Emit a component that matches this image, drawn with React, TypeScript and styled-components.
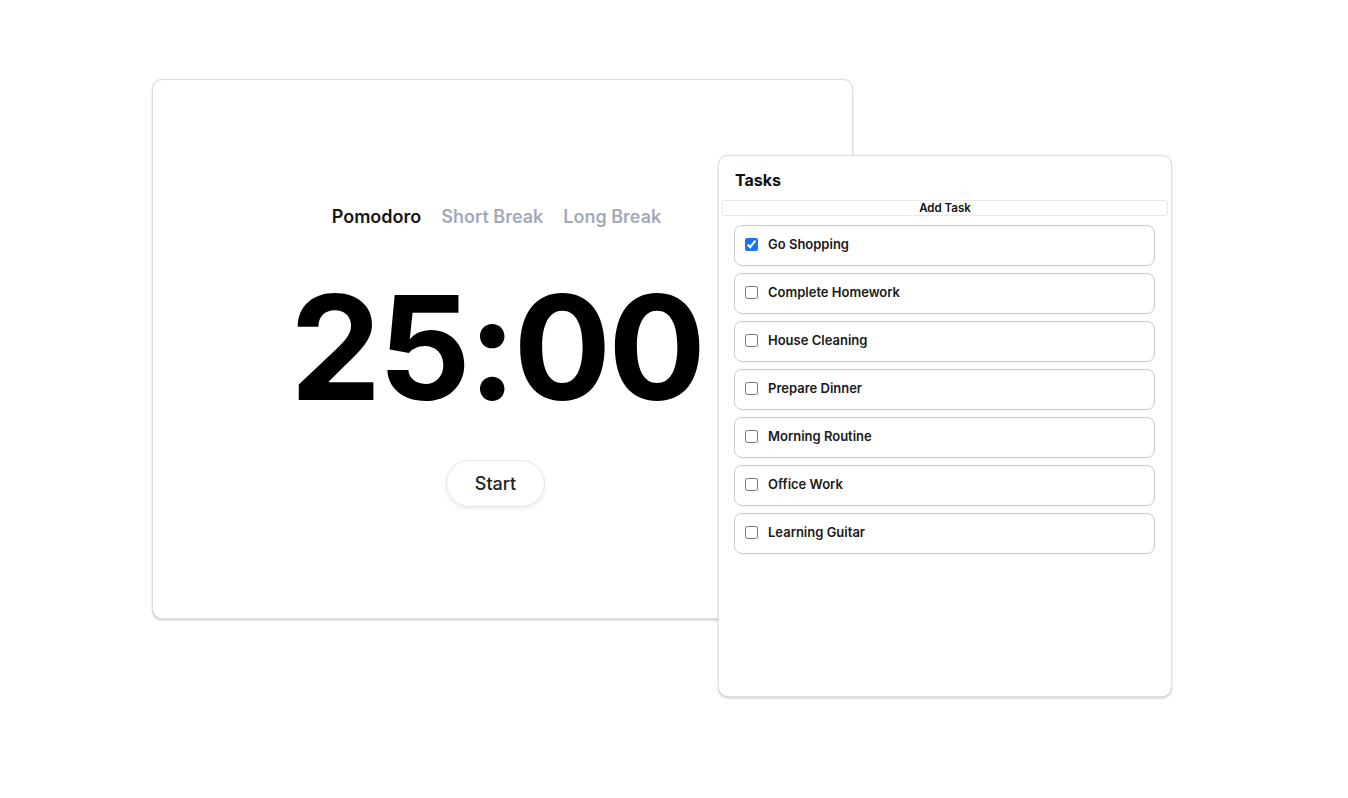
import React, { useState } from "react";
import styled, { createGlobalStyle } from "styled-components";

const Global = createGlobalStyle`
  html, body { margin: 0; padding: 0; background: #ffffff; }
  body { font-family: Inter, "Noto Sans", "Liberation Sans", sans-serif; color: #111; }
  * { box-sizing: border-box; }
`;

const Page = styled.div`
  width: 1348px;
  height: 798px;
  display: flex;
  align-items: flex-start;
  padding: 79px 0 0 152px;
`;

const TimerCard = styled.section`
  width: 701px;
  height: 540px;
  flex-shrink: 0;
  background: #fff;
  border: 1px solid #dedede;
  border-radius: 10px;
  box-shadow: 0 2px 2px rgba(0, 0, 0, 0.14), 0 0 1px rgba(0, 0, 0, 0.2);
  display: flex;
  flex-direction: column;
  align-items: center;
  padding: 125px 12px 0 0;
`;

const Tabs = styled.nav`
  display: flex;
  gap: 20px;
  height: 24px;
  align-items: center;
`;

const Tab = styled.button<{ $active?: boolean }>`
  border: none;
  background: none;
  padding: 0;
  font-family: inherit;
  font-size: 18px;
  line-height: 24px;
  font-weight: 600;
  color: ${(p) => (p.$active ? "#151515" : "#a3aab8")};
  cursor: pointer;
`;

const Clock = styled.div`
  margin-top: 46px;
  font-size: 145px;
  line-height: 145px;
  font-weight: 700;
  letter-spacing: -3px;
  color: #000;
`;

const StartButton = styled.button`
  margin-top: 40px;
  margin-right: 2px;
  width: 99px;
  height: 47px;
  border-radius: 24px;
  border: 1px solid #e6e6e6;
  background: #fff;
  box-shadow: 0 2px 4px rgba(0, 0, 0, 0.08);
  font-family: inherit;
  font-size: 18px;
  font-weight: 500;
  color: #222;
  cursor: pointer;
`;

const TasksPanel = styled.section`
  position: relative;
  z-index: 1;
  margin: 76px 0 0 -135px;
  width: 454px;
  height: 542px;
  flex-shrink: 0;
  background: #fff;
  border: 1px solid #e2e2e2;
  border-radius: 10px;
  box-shadow: 0 2px 2px rgba(0, 0, 0, 0.14), 0 0 1px rgba(0, 0, 0, 0.2);
  padding: 14px 3px 0 3px;
  display: flex;
  flex-direction: column;
`;

const Title = styled.h2`
  margin: 0 0 0 13px;
  font-size: 16px;
  line-height: 20px;
  font-weight: 700;
  color: #111;
`;

const AddTask = styled.button`
  margin-top: 10px;
  height: 16px;
  border: 1px solid #e8e8ec;
  border-radius: 3px;
  background: #fff;
  font-family: inherit;
  font-size: 11.5px;
  line-height: 14px;
  font-weight: 600;
  color: #111;
  padding: 0;
  cursor: pointer;
`;

const List = styled.ul`
  list-style: none;
  margin: 9px 0 0 0;
  padding: 0 13px 0 12px;
  display: flex;
  flex-direction: column;
  gap: 7px;
`;

const Item = styled.li`
  height: 41px;
  border: 1px solid #c8cad3;
  border-radius: 8px;
  display: flex;
  align-items: center;
  padding: 0 0 3px 10px;
  gap: 10px;
`;

const Check = styled.input`
  margin: 0;
  width: 13px;
  height: 13px;
  accent-color: #1a73e8;
`;

const Label = styled.span`
  font-size: 13px;
  font-weight: 600;
  color: #1a1a1a;
`;

const initial = [
  { name: "Go Shopping", done: true },
  { name: "Complete Homework", done: false },
  { name: "House Cleaning", done: false },
  { name: "Prepare Dinner", done: false },
  { name: "Morning Routine", done: false },
  { name: "Office Work", done: false },
  { name: "Learning Guitar", done: false },
];

export default function App() {
  const [tasks, setTasks] = useState(initial);
  const [mode, setMode] = useState("Pomodoro");
  return (
    <>
      <Global />
      <Page>
        <TimerCard>
          <Tabs>
            {["Pomodoro", "Short Break", "Long Break"].map((m) => (
              <Tab key={m} $active={mode === m} onClick={() => setMode(m)}>
                {m}
              </Tab>
            ))}
          </Tabs>
          <Clock>25:00</Clock>
          <StartButton>Start</StartButton>
        </TimerCard>
        <TasksPanel>
          <Title>Tasks</Title>
          <AddTask>Add Task</AddTask>
          <List>
            {tasks.map((t, i) => (
              <Item key={t.name}>
                <Check
                  type="checkbox"
                  checked={t.done}
                  onChange={() =>
                    setTasks((prev) =>
                      prev.map((x, j) => (j === i ? { ...x, done: !x.done } : x))
                    )
                  }
                />
                <Label>{t.name}</Label>
              </Item>
            ))}
          </List>
        </TasksPanel>
      </Page>
    </>
  );
}
